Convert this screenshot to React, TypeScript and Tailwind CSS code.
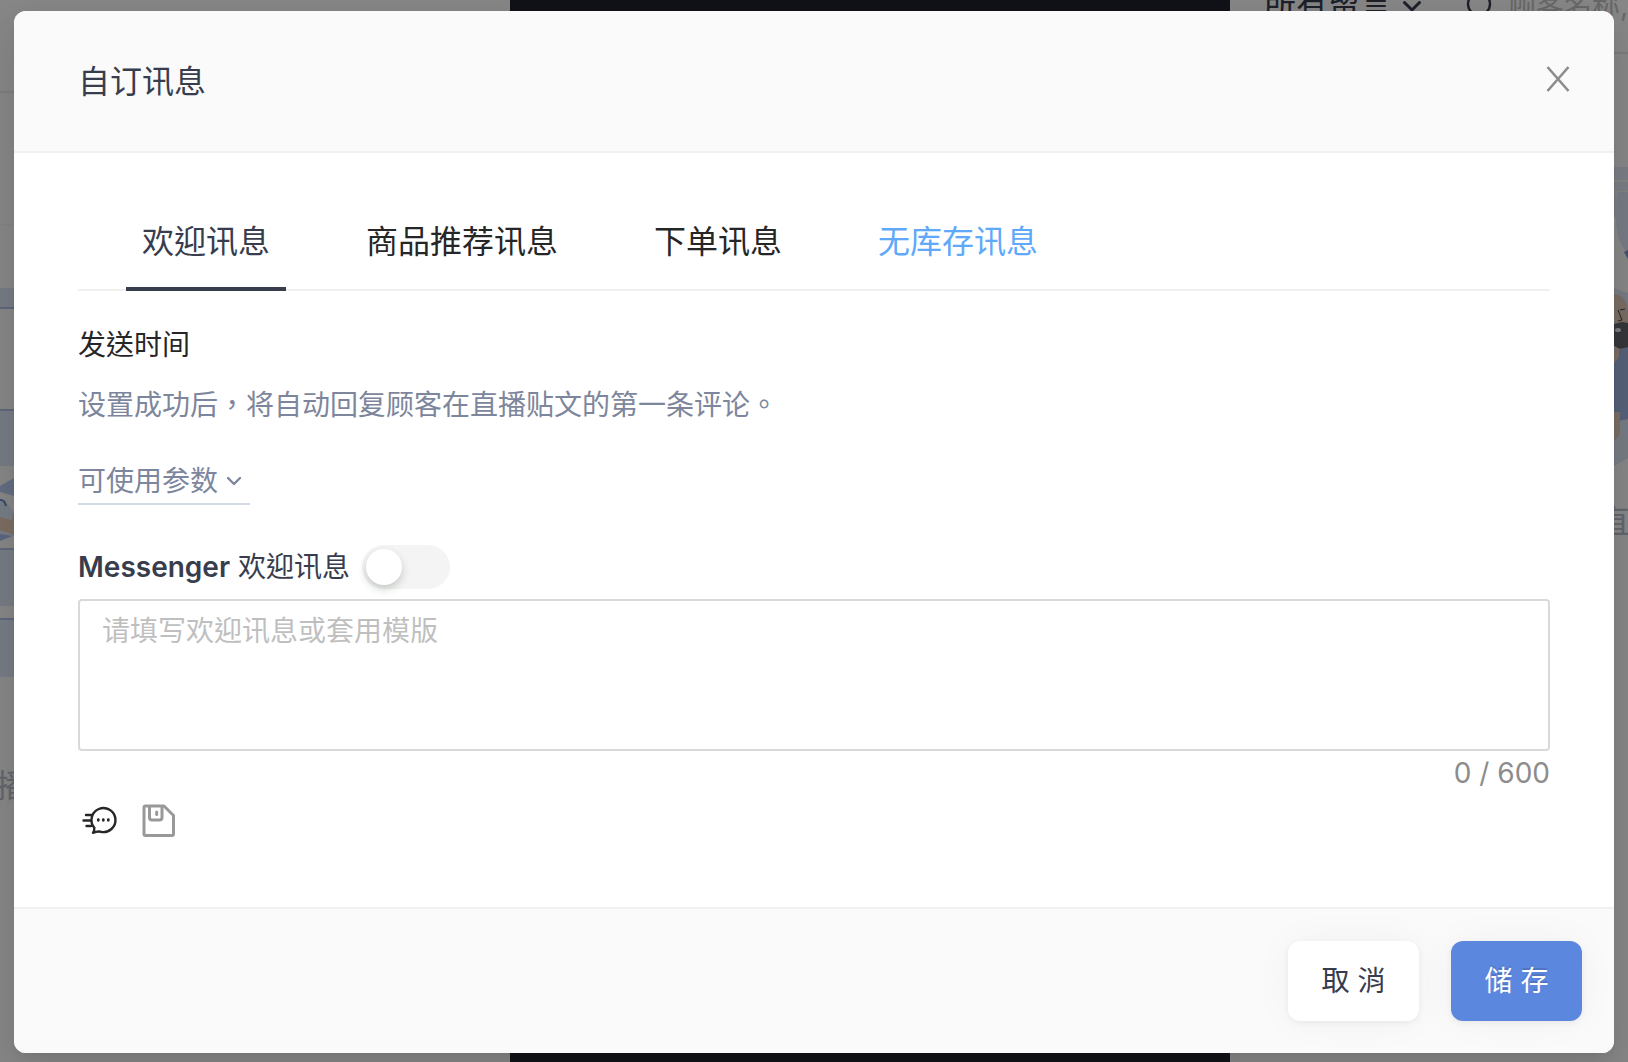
import { useState } from "react";

const TABS = [
  { key: "welcome", label: "欢迎讯息" },
  { key: "recommend", label: "商品推荐讯息" },
  { key: "order", label: "下单讯息" },
  { key: "soldout", label: "无库存讯息" },
];

const MAX_LENGTH = 600;

function CloseIcon() {
  return (
    <svg width="24" height="26" viewBox="0 0 24 26" fill="none" stroke="currentColor" strokeWidth="2.6" aria-hidden>
      <path d="M1.5 1 22.5 25M22.5 1 1.5 25" />
    </svg>
  );
}

function ChevronIcon({ className }: { className?: string }) {
  return (
    <svg
      viewBox="0 0 16 10"
      fill="none"
      stroke="currentColor"
      strokeWidth="2.4"
      strokeLinecap="round"
      strokeLinejoin="round"
      className={className}
      aria-hidden
    >
      <path d="M2 2l6 6 6-6" />
    </svg>
  );
}

function TemplateIcon() {
  return (
    <svg width="36" height="32" viewBox="0 0 36 32" fill="none" stroke="currentColor" strokeWidth="2.4" strokeLinecap="round" strokeLinejoin="round" aria-hidden>
      <path d="M12.300 22.800A12 12 0 1 1 19 26.800c-1.600-.3-3.200-.6-4.600 0-1.200.6-2.100.9-3.400 1 1.200-1.300 1.500-3 1.300-5Z" />
      <path d="M4 10h6M1.500 15.500h7.500M4.500 21h4.500" />
      <path d="M16.300 14.700v.6M21.300 14.700v.6M26.300 14.700v.6" strokeWidth="2.8" />
    </svg>
  );
}

function SaveIcon() {
  return (
    <svg width="34" height="34" viewBox="0 0 34 34" fill="none" stroke="currentColor" strokeWidth="3" strokeLinejoin="round" aria-hidden>
      <path d="M3.500 2H22l9.500 9.500V30a1.500 1.500 0 0 1-1.500 1.500H3.500A1.500 1.500 0 0 1 2 30V3.500A1.500 1.500 0 0 1 3.500 2Z" />
      <path d="M7.500 2.500v11A2.500 2.500 0 0 0 10 16h7.500a2.500 2.500 0 0 0 2.500-2.500v-11" />
      <path d="M14.700 8v2.500" strokeLinecap="round" />
    </svg>
  );
}

// live page that stays visible around the dialog
function LivePage() {
  return (
    <div className="absolute inset-0 flex overflow-hidden bg-[#f7f7f7]" aria-hidden>
      <div className="flex-1">
        <div className="h-[93px] border-b-2 border-[#e8e8e8]" />
        <div className="h-[133px] border-b-2 border-[#f0f0f0]" />
        <svg width="14" height="452" viewBox="0 226 14 452">
          <path fill="#dbe2f2" d="M0 288h14v20H0z" />
          <path fill="#dbe2f2" d="M0 410h14v56H0z" />
          <path fill="#b6c9ef" d="M14 478v18L0 492v-6z" />
          <path fill="#dbe5f8" d="M0 502c6-2 10 4 14 12v22L0 541z" />
          <path fill="#e6cbb6" d="M0 517l12 3 2-10v25L0 530z" />
          <path fill="#a4bce8" d="M0 534l12 2-12 5z" />
          <path fill="#dbe2f2" d="M0 549h14v57H0zM0 619h14v58H0z" />
          <path stroke="#aebfe2" strokeWidth="2" d="M0 308h14M0 410h14M0 549h14M0 619h14" />
          <path fill="none" stroke="#6688c8" strokeWidth="2" d="M0 500c4 0 5 2 6 6" />
        </svg>
        <p className="mt-[84px] -ml-1 text-[32px] leading-[48px] text-[#b4bac6]">播</p>
      </div>
      <div className="w-[720px] bg-[#22242e]" />
      <div className="w-[398px]">
        <div className="-mt-10 flex h-[94px] items-center border-b-2 border-[#e2e2e2] pl-[34px] whitespace-nowrap">
          <span className="text-[32px] text-[#383d4e]">所有留言</span>
          <ChevronIcon className="ml-2.5 w-5 shrink-0 text-[#383d4e]" />
          <svg width="26" height="26" viewBox="0 0 26 26" fill="none" stroke="#383d4e" strokeWidth="2.4" className="ml-[44px] shrink-0">
            <circle cx="13" cy="11" r="11" />
          </svg>
          <span className="ml-4 text-[28px] text-[#bfbfbf]">顾客名称,</span>
        </div>
        <svg width="398" height="420" viewBox="-384 54 398 420">
          <path fill="#e0e5f2" d="M-20 167h34v50H-20z" />
          <path stroke="#f3f3ee" strokeWidth="2" d="M0 181h14M0 192h14" />
          <path fill="#dbe2f2" d="M4 192h10v62C6 246 3 234 2 222z" />
          <path fill="#7d97d0" d="M14 250v9l-4-7z" />
          <path fill="#dbe4f2" d="M0 288l14 5v165l-14 8z" />
          <path fill="#dfc9b8" d="M0 294c8 0 14 8 14 18v14H0z" />
          <path fill="none" stroke="#404048" d="M4 310l4 10-4 1M6 310l5-1" />
          <path fill="#9db2de" d="M0 352l14-6v73L0 422z" />
          <path fill="#dfc9b8" d="M0 347h5v10l-5 6zM0 412h6v18c0 6-3 9-6 10z" />
          <path fill="#62646c" d="M0 324l8-2 6 1v24l-8 2-6-3z" />
          <ellipse cx="4" cy="330" rx="3" ry="2" fill="#dfe5e5" />
        </svg>
        <p className="mt-6 ml-[368px] text-[32px] leading-[48px] text-[#b4bac6]">直</p>
      </div>
    </div>
  );
}

export default function App() {
  const [tab, setTab] = useState("welcome");
  const [enabled, setEnabled] = useState(false);
  const [message, setMessage] = useState("");

  return (
    <div
      lang="zh-Hant"
      className="relative min-h-screen overflow-hidden font-['Inter','Noto_Sans_CJK_TC',sans-serif] text-[28px] leading-[44px] text-[#262626]"
    >
      <LivePage />
      <div className="relative min-h-screen bg-black/45 px-3.5 pt-[11px] pb-2">
        <section
          role="dialog"
          aria-modal="true"
          aria-labelledby="dialog-title"
          className="overflow-hidden rounded-xl bg-white shadow-[0_12px_32px_rgba(0,0,0,0.08),0_6px_12px_-8px_rgba(0,0,0,0.12),0_18px_56px_16px_rgba(0,0,0,0.05)]"
        >
          <header className="flex h-[142px] items-center justify-between border-b-2 border-[#f0f0f0] bg-[#fafafa] pr-11 pl-16">
            <h1 id="dialog-title" className="pt-0.5 text-[32px] text-[#383d4e]">
              自订讯息
            </h1>
            <button type="button" aria-label="关闭" className="pb-1 text-[#8c8c8c]">
              <CloseIcon />
            </button>
          </header>

          <div className="px-16 pt-10 pb-16">
            <div role="tablist" className="flex gap-16 border-b-2 border-[#f0f0f0] px-12">
              {TABS.map(({ key, label }) => (
                <button
                  key={key}
                  type="button"
                  role="tab"
                  aria-selected={tab === key}
                  onClick={() => setTab(key)}
                  className={`-mb-0.5 h-[98px] border-b-4 px-4 pt-1 text-[32px] whitespace-nowrap ${
                    tab === key
                      ? "border-[#383d4e] text-[#383d4e]"
                      : key === "soldout"
                        ? "border-transparent text-[#60a9fa]"
                        : "border-transparent"
                  }`}
                >
                  {label}
                </button>
              ))}
            </div>

            <h2 className="mt-8">发送时间</h2>
            <p className="mt-4 text-[#7d869c]">设置成功后，将自动回复顾客在直播贴文的第一条评论。</p>

            <button
              type="button"
              className="mt-8 flex items-center gap-2 border-b-2 border-[#d3dde7] pr-2 text-[#7d869c]"
            >
              可使用参数
              <ChevronIcon className="w-4" />
            </button>

            <div className="mt-10 flex items-center gap-3 text-[#383d4e]">
              <label htmlFor="messenger-switch">
                <span className="font-semibold">Messenger</span> 欢迎讯息
              </label>
              <input
                id="messenger-switch"
                type="checkbox"
                role="switch"
                checked={enabled}
                onChange={(e) => setEnabled(e.target.checked)}
                className="flex h-11 w-[88px] cursor-pointer appearance-none items-center rounded-full bg-[#f4f4f4] px-1 before:size-9 before:rounded-full before:bg-white before:shadow-[0_4px_8px_rgba(0,35,11,0.2)] checked:justify-end checked:bg-[#5c87de]"
              />
            </div>

            <textarea
              aria-label="Messenger 欢迎讯息"
              value={message}
              maxLength={MAX_LENGTH}
              onChange={(e) => setMessage(e.target.value)}
              placeholder="请填写欢迎讯息或套用模版"
              className="mt-2.5 block h-[152px] w-full resize-none rounded border-2 border-[#d9d9d9] px-[22px] py-2 outline-none placeholder:text-[#bfbfbf]"
            />
            <p className="text-right text-[#8c8c8c]">
              {message.length} / {MAX_LENGTH}
            </p>

            <div className="mt-1 flex h-11 items-center gap-6 pl-1">
              <button type="button" aria-label="套用模版">
                <TemplateIcon />
              </button>
              <button type="button" aria-label="储存模版" className="text-[#999999]">
                <SaveIcon />
              </button>
            </div>
          </div>

          <footer className="flex justify-end gap-8 border-t-2 border-[#f0f0f0] bg-[#fafafa] p-8">
            <button
              type="button"
              className="h-20 w-[131px] rounded-xl bg-white text-[#383d4e] shadow-[0_2px_6px_rgba(0,0,0,0.06),0_0_40px_rgba(0,0,0,0.04)]"
            >
              取 消
            </button>
            <button
              type="button"
              className="h-20 w-[131px] rounded-xl bg-[#5c87de] text-white shadow-[0_2px_6px_rgba(0,0,0,0.06),0_0_40px_rgba(0,0,0,0.04)] [text-shadow:0_-2px_0_rgba(0,0,0,0.12)]"
            >
              储 存
            </button>
          </footer>
        </section>
      </div>
    </div>
  );
}
